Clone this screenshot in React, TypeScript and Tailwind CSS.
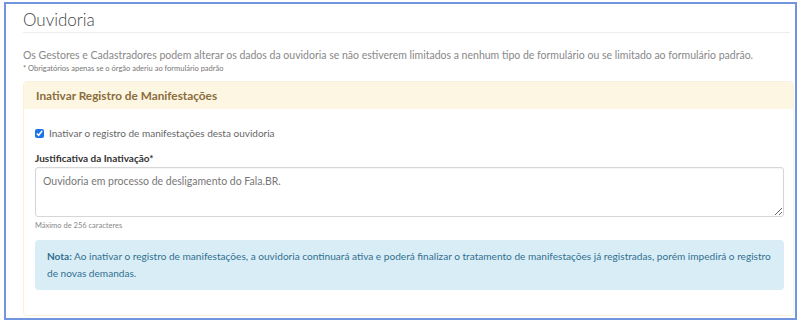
import React from "react";

export default function App() {
  return (
    <div className="h-[325px] w-[800px] bg-white pl-1 pt-0.5 font-['Lato',sans-serif]">
      <div className="h-[318px] w-[793px] border-2 border-[#7395e0] pl-[17px] pr-px">
        <h1 className="pt-[4px] text-[17px] font-light leading-[24px] text-[#444]">Ouvidoria</h1>
        <div className="mr-1 border-b border-[#eee]" />
        <p className="mt-[15px] text-[10.5px] leading-[14px] text-[#888]">
          Os Gestores e Cadastradores podem alterar os dados da ouvidoria se não estiverem limitados a nenhum tipo
          de formulário ou se limitado ao formulário padrão.
        </p>
        <p className="mt-[1px] text-[7.5px] leading-[12px] text-[#777]">* Obrigatórios apenas se o órgão aderiu ao formulário padrão</p>

        <div className="mt-[6px] h-[235px] rounded border border-[#faf0dc] bg-white">
          <div className="flex h-[27px] items-center rounded-t bg-[#fdf6e3] px-3">
            <h2 className="text-[11.8px] font-bold text-[#8a6d3b]">Inativar Registro de Manifestações</h2>
          </div>
          <div className="px-[11px] pt-[17px]">
            <label className="flex items-center gap-[5px] text-[10px] leading-[14px] text-[#666]">
              <input type="checkbox" defaultChecked className="h-[9px] w-[9px] accent-[#1a73e8]" />
              Inativar o registro de manifestações desta ouvidoria
            </label>
            <div className="mt-[11px] text-[10px] font-bold leading-[14px] text-[#333]">Justificativa da Inativação*</div>
            <textarea
              defaultValue="Ouvidoria em processo de desligamento do Fala.BR."
              className="mt-[2px] block h-[50px] w-[749px] resize-y rounded-[3px] border border-[#d6d6d6] px-[7px] py-[6px] text-[10.5px] leading-[14px] text-[#777] shadow-[inset_0_1px_1px_rgba(0,0,0,0.04)] outline-none"
            />
            <div className="mt-[3px] text-[7.5px] leading-[12px] text-[#888]">Máximo de 256 caracteres</div>
            <p className="mt-[8px] w-[749px] rounded bg-[#d9edf7] px-[12px] py-[8px] text-[10.1px] leading-[17px] text-[#31708f]">
              <b>Nota:</b> Ao inativar o registro de manifestações, a ouvidoria continuará ativa e poderá finalizar o
              tratamento de manifestações já registradas, porém impedirá o registro de novas demandas.
            </p>
          </div>
        </div>
      </div>
    </div>
  );
}
